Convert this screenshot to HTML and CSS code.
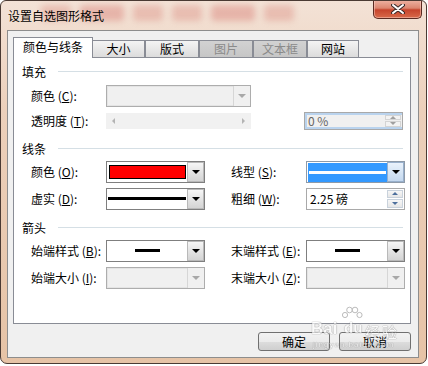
FILE: index.html
```html
<!DOCTYPE html>
<html lang="zh-CN">
<head>
  <meta charset="UTF-8">
  <meta name="viewport" content="width=device-width, initial-scale=1.0">
  <title>设置自选图形格式</title>
  <link rel="stylesheet" href="styles.css">
</head>
<body>
  <div class="window">
    <div class="glow"><span></span><span></span><span></span><span></span><span></span><span></span></div>
    <div class="titlebar">
      <span class="title">设置自选图形格式</span>
      <button class="close" title="关闭">
        <svg width="14" height="10" viewBox="0 0 14 10">
          <path d="M2 1 L12 9 M12 1 L2 9" stroke="#3b2a2a" stroke-width="4" stroke-linecap="round" fill="none"/>
          <path d="M2 1 L12 9 M12 1 L2 9" stroke="#ffffff" stroke-width="2" stroke-linecap="round" fill="none"/>
        </svg>
      </button>
    </div>

    <div class="client">
      <div class="tabs">
        <div class="tab active">颜色与线条</div>
        <div class="tab">大小</div>
        <div class="tab">版式</div>
        <div class="tab disabled">图片</div>
        <div class="tab disabled">文本框</div>
        <div class="tab last">网站</div>
      </div>

      <div class="panel">
        <div class="group first">填充</div>
        <div class="row short-row">
          <div class="field">
            <span class="label">颜色 (<u>C</u>):</span>
            <div class="combo disabled wide"><span class="value"></span><span class="drop"></span></div>
          </div>
        </div>
        <div class="row short-row">
          <div class="field">
            <span class="label">透明度 (<u>T</u>):</span>
            <div class="slider"><span class="arrow-left"></span><span class="arrow-right"></span></div>
          </div>
          <div class="spin readonly">
            <span class="text">0 %</span>
            <span class="arrows"><span class="up"></span><span class="down"></span></span>
          </div>
        </div>

        <div class="group">线条</div>
        <div class="row">
          <div class="field">
            <span class="label">颜色 (<u>O</u>):</span>
            <div class="combo"><span class="swatch"></span><span class="drop"></span></div>
          </div>
          <div class="field">
            <span class="label">线型 (<u>S</u>):</span>
            <div class="combo selected"><span class="line-val"></span><span class="drop"></span></div>
          </div>
        </div>
        <div class="row">
          <div class="field">
            <span class="label">虚实 (<u>D</u>):</span>
            <div class="combo"><span class="line-val"></span><span class="drop"></span></div>
          </div>
          <div class="field">
            <span class="label">粗细 (<u>W</u>):</span>
            <div class="spin">
              <span class="text">2.25 磅</span>
              <span class="arrows"><span class="up"></span><span class="down"></span></span>
            </div>
          </div>
        </div>

        <div class="group">箭头</div>
        <div class="row">
          <div class="field">
            <span class="label">始端样式 (<u>B</u>):</span>
            <div class="combo"><span class="line-val short"></span><span class="drop"></span></div>
          </div>
          <div class="field">
            <span class="label">末端样式 (<u>E</u>):</span>
            <div class="combo"><span class="line-val short"></span><span class="drop"></span></div>
          </div>
        </div>
        <div class="row">
          <div class="field">
            <span class="label">始端大小 (<u>I</u>):</span>
            <div class="combo disabled"><span class="value"></span><span class="drop"></span></div>
          </div>
          <div class="field">
            <span class="label">末端大小 (<u>Z</u>):</span>
            <div class="combo disabled"><span class="value"></span><span class="drop"></span></div>
          </div>
        </div>
      </div>

      <div class="buttons">
        <button class="btn">确定</button>
        <button class="btn">取消</button>
      </div>
    </div>

    <div class="watermark">
      <span class="wm-bai">Bai</span>
      <svg class="wm-paw" width="22" height="14" viewBox="0 0 22 14">
        <circle cx="4" cy="9" r="2.6"/>
        <circle cx="8.5" cy="4" r="2.8"/>
        <circle cx="14" cy="4" r="2.8"/>
        <circle cx="18.5" cy="9" r="2.6"/>
      </svg>
      <span class="wm-du">du</span>
      <span class="wm-jy">经验</span>
      <span class="wm-url">jingyan.baidu.com</span>
    </div>
  </div>
</body>
</html>
```

FILE: styles.css
```css
* {
  box-sizing: border-box;
}
body {
  margin: 0;
  background: #fff;
  font-family: "Noto Sans CJK SC", "Liberation Sans", sans-serif;
  font-size: 12px;
  color: #000;
}
u {
  text-decoration: underline;
}

/* window frame */
.window {
  position: relative;
  width: 427px;
  height: 364px;
  border: 1px solid #4a3a33;
  border-radius: 6px 6px 7px 7px;
  background: linear-gradient(#f3e2d6, #ecd0bb 30%, #e6c3a6);
  padding: 0 7px 0 6px;
  display: flex;
  flex-direction: column;
  overflow: hidden;
}
/* blurred red shapes seen through the glass title bar */
.glow {
  position: absolute;
  left: 40px;
  top: 4px;
  display: flex;
  gap: 9px;
  filter: blur(3px);
}
.glow span {
  width: 30px;
  height: 16px;
  border-radius: 4px;
  background: rgba(200, 70, 60, 0.22);
}
.glow span:nth-child(2),
.glow span:nth-child(5) {
  width: 44px;
  background: rgba(200, 70, 60, 0.28);
}
.titlebar {
  position: relative;
  height: 29px;
  flex: none;
  display: flex;
  justify-content: space-between;
  align-items: flex-start;
}
.title {
  margin-top: 7px;
  margin-left: 1px;
  line-height: 16px;
  color: #000;
}
.close {
  margin-top: -1px;
  margin-right: -3px;
  width: 49px;
  height: 19px;
  padding: 0;
  border: 1px solid #5b2b22;
  border-top: none;
  border-radius: 0 0 5px 5px;
  background: linear-gradient(#eeb4a4, #dc8670 45%, #c6442c 55%, #d86a4a);
  display: flex;
  align-items: center;
  justify-content: center;
  box-shadow: inset 0 0 0 1px rgba(255, 220, 210, 0.45);
}

/* client area */
.client {
  height: 328px;
  flex: none;
  background: #f0f0f0;
  border: 1px solid #8d8d8d;
  padding: 6px 7px 6px 5px;
  display: flex;
  flex-direction: column;
}
.tabs {
  display: flex;
  align-items: flex-end;
  height: 21px;
  margin-bottom: -1px;
  position: relative;
  z-index: 1;
}
.tab {
  width: 54px;
  height: 17px;
  margin-bottom: 1px;
  border: 1px solid #898c95;
  border-bottom: none;
  background: linear-gradient(#f4f4f4, #dcdcdc);
  text-align: center;
  line-height: 15px;
}
.tab.active {
  width: 80px;
  height: 21px;
  margin-bottom: 0;
  background: #fff;
  line-height: 18px;
}
.tab.active + .tab {
  margin-left: -1px;
  width: 53px;
}
.tab.disabled {
  background: linear-gradient(#d2d2d2, #c6c6c6);
  color: #8a8a8a;
}
.tab.last {
  width: 52px;
}

.panel {
  height: 267px;
  flex: none;
  background: #fff;
  border: 1px solid #898c95;
  padding: 5px 5px 0 8px;
}
.group {
  display: flex;
  align-items: center;
  height: 16px;
  margin: 7px 0 2px;
}
.group::after {
  content: "";
  flex: 1;
  height: 1px;
  background: #d5dfe5;
  margin-left: 12px;
  margin-right: 2px;
}
.group.first {
  margin-top: 0;
  margin-bottom: 4px;
}
.row {
  display: flex;
  align-items: center;
  height: 27px;
  padding-left: 9px;
}
.row.short-row {
  height: 25px;
}
.field {
  display: flex;
  align-items: center;
}
.field + .field {
  margin-left: 26px;
}
.label {
  width: 75px;
  flex: none;
  white-space: pre;
}

/* combo boxes */
.combo {
  width: 99px;
  height: 22px;
  border: 1px solid #7f7f7f;
  background: #fff;
  display: flex;
}
.combo.wide {
  width: 145px;
}
.drop {
  width: 17px;
  flex: none;
  background: linear-gradient(#f6f6f6, #e4e4e4 50%, #d4d4d4);
  border: 1px solid #b9b9b9;
  display: flex;
  align-items: center;
  justify-content: center;
}
.drop::before {
  content: "";
  border-left: 4px solid transparent;
  border-right: 4px solid transparent;
  border-top: 4px solid #000;
}
.combo.disabled {
  border-color: #adadad;
  background: #f0f0f0;
  box-shadow: inset 0 0 0 1px #e4e4e4;
}
.combo.disabled .value {
  flex: 1;
}
.combo.disabled .drop {
  background: #f0f0f0;
  border: none;
  border-left: 1px solid #d6d6d6;
}
.combo.disabled .drop::before {
  border-top-color: #a8a8a8;
}
.swatch {
  flex: 1;
  margin: 3px 1px 3px 2px;
  background: #ff0000;
  border: 1px solid #000;
}
.line-val {
  flex: 1;
  display: flex;
  align-items: center;
  padding: 0 1px;
}
.line-val::before {
  content: "";
  flex: 1;
  height: 3px;
  background: #000;
}
.line-val.short {
  justify-content: center;
}
.line-val.short::before {
  flex: none;
  width: 25px;
}
.combo.selected {
  border-color: #8e9aa8;
}
.combo.selected .line-val {
  margin: 1px 0 0 1px;
  background: #3399ff;
}
.combo.selected .line-val::before {
  background: #fff;
}
.combo.selected .drop {
  background: linear-gradient(#eaf2fb, #d6e5f5 50%, #c4d8ee);
  border-color: #98b0cc;
}

/* slider and spin boxes */
.slider {
  width: 145px;
  height: 16px;
  background: #f1f1f1;
  display: flex;
  justify-content: space-between;
  align-items: center;
  padding: 0 6px;
}
.arrow-left {
  border-top: 3px solid transparent;
  border-bottom: 3px solid transparent;
  border-right: 3px solid #b4b4b4;
}
.arrow-right {
  border-top: 3px solid transparent;
  border-bottom: 3px solid transparent;
  border-left: 3px solid #b4b4b4;
}
.spin {
  width: 99px;
  height: 22px;
  border: 1px solid #a9a9a9;
  background: #fff;
  display: flex;
  align-items: center;
}
.spin .text {
  flex: 1;
  padding-left: 3px;
  white-space: pre;
}
.spin .arrows {
  width: 17px;
  height: 100%;
  padding: 1px 1px 1px 0;
  display: flex;
  flex-direction: column;
  gap: 1px;
}
.spin .up,
.spin .down {
  flex: 1;
  border: 1px solid #c9d2dc;
  background: linear-gradient(#f7f7f7, #e6e6e6);
  display: flex;
  align-items: center;
  justify-content: center;
}
.spin .up::before {
  content: "";
  border-left: 3px solid transparent;
  border-right: 3px solid transparent;
  border-bottom: 3px solid #4d6f9c;
}
.spin .down::before {
  content: "";
  border-left: 3px solid transparent;
  border-right: 3px solid transparent;
  border-top: 3px solid #4d6f9c;
}
.spin.readonly {
  height: 18px;
  margin-left: 53px;
  background: #f0f0f0;
  box-shadow: inset 0 2px #b9d3ee, inset 0 -2px #b9d3ee, inset 2px 0 #b9d3ee;
  color: #666;
}
.spin.readonly .arrows {
  padding: 2px 1px 2px 0;
}
.spin.readonly .up,
.spin.readonly .down {
  border-color: #d4d4d4;
  background: #f3f3f3;
}
.spin.readonly .up::before {
  border-bottom-color: #a0a0a0;
}
.spin.readonly .down::before {
  border-top-color: #a0a0a0;
}

/* buttons */
.buttons {
  display: flex;
  justify-content: flex-end;
  gap: 9px;
  margin-top: 8px;
}
.btn {
  width: 72px;
  height: 19px;
  padding: 0;
  border: 1px solid #707070;
  border-radius: 3px;
  background: linear-gradient(#f2f2f2, #ebebeb 50%, #dddddd 50%, #cfcfcf);
  font: inherit;
  line-height: 17px;
  color: #000;
}

/* watermark */
.watermark {
  position: absolute;
  left: 309px;
  top: 303px;
  width: 100px;
  height: 48px;
  opacity: 0.7;
  pointer-events: none;
  color: #fff;
  text-shadow: 0 0 1px #777, 0 0 1px #777;
}
.wm-bai {
  position: absolute;
  left: 1px;
  top: 15px;
  font: bold 17px "Liberation Sans", sans-serif;
}
.wm-paw {
  position: absolute;
  left: 31px;
  top: 2px;
  fill: #fff;
  stroke: #888;
  stroke-width: 0.8;
}
.wm-du {
  position: absolute;
  left: 34px;
  top: 15px;
  font: bold 15px "Liberation Sans", sans-serif;
}
.wm-jy {
  position: absolute;
  left: 55px;
  top: 17px;
  font-size: 15px;
  letter-spacing: 2px;
}
.wm-url {
  position: absolute;
  left: 3px;
  top: 36px;
  font: 8px "Liberation Sans", sans-serif;
  letter-spacing: 1px;
}
```
